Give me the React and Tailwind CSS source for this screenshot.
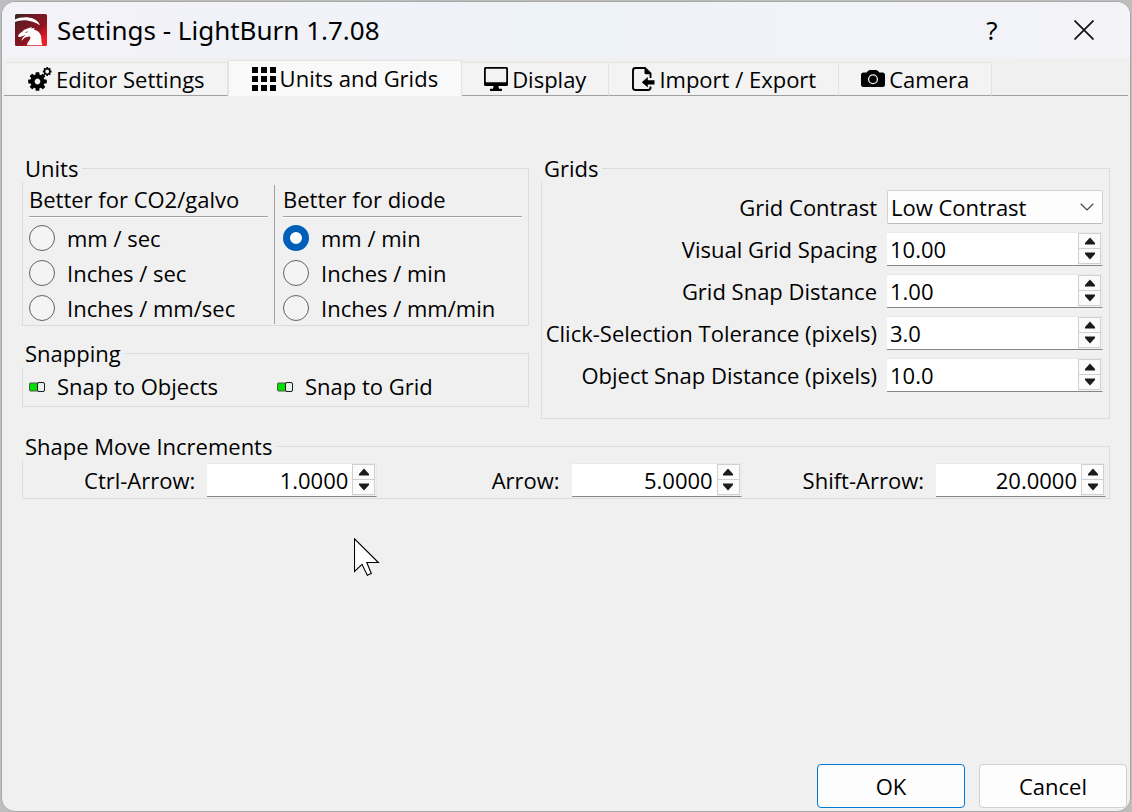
import { useId, useState } from "react";

function LogoIcon() {
  return (
    <svg width="32" height="32" viewBox="0 0 32 32" aria-hidden="true">
      <defs>
        <linearGradient id="logo-bg" x1="0" y1="0" x2="1" y2="1">
          <stop offset="0" stopColor="#2b2624" />
          <stop offset="0.25" stopColor="#6a1a22" />
          <stop offset="0.6" stopColor="#8a1420" />
          <stop offset="0.85" stopColor="#ee1c25" />
          <stop offset="1" stopColor="#ee1c25" />
        </linearGradient>
      </defs>
      <rect width="32" height="32" rx="1.5" fill="url(#logo-bg)" />
      <path d="M0 5.500C5 2.900 13 2.400 18.500 4.800C22.500 6.700 24.600 9.600 24.800 11.400C21 8.600 15 6.300 9 6.300C5.500 6.300 2.500 7 0 8Z" fill="#fff" />
      <path
        d="M3.200 21.500C4 19.500 6 18.700 7.500 17.500C9 16 10.500 15 12.500 14.600L16.600 13L16.400 14.500L19.600 14L19 15.400C22.500 16.200 25.200 18.600 26 22C26.700 25 26 28.500 27.500 31.200H12C12 28.500 14.500 27 15.300 24.500C15.500 23.500 15.200 22.800 14.600 22.300C12.800 23.300 11.300 22.900 10 23.600C9 24.400 7.800 26 6.200 26.800L7.400 24.200C8.300 22.800 9.600 22.100 10.300 21.200C8.600 21.300 7.200 22.300 5.800 22.700C4.600 23.100 3.300 23.600 3.200 21.500Z"
        fill="#fff"
      />
      <path d="M9.500 18.700L12.800 17.200L12.200 18.600Z" fill="#7d1420" />
    </svg>
  );
}

function Gear({ cx, cy, r, hole, tooth }) {
  return (
    <g transform={`translate(${cx} ${cy})`}>
      <circle r={(r + hole) / 2} fill="none" stroke="currentColor" strokeWidth={r - hole} />
      {[0, 45, 90, 135, 180, 225, 270, 315].map((angle) => (
        <rect key={angle} x={-tooth} y={-r - tooth * 1.1} width={tooth * 2} height={tooth * 2} rx={tooth * 0.3} transform={`rotate(${angle})`} fill="currentColor" />
      ))}
    </g>
  );
}

function GearsIcon() {
  return (
    <svg width="24" height="24" viewBox="0 0 24 24" aria-hidden="true">
      <Gear cx={9.5} cy={14.5} r={7.200} hole={2.900} tooth={1.900} />
      <Gear cx={19.200} cy={4.500} r={3.400} hole={1.900} tooth={0.900} />
    </svg>
  );
}

function GridIcon() {
  return (
    <svg width="24" height="24" viewBox="0 0 24 24" fill="currentColor" aria-hidden="true">
      {[0, 9, 18].map((y) => [0, 9, 18].map((x) => <rect key={`${x}-${y}`} x={x} y={y} width="6" height="6" />))}
    </svg>
  );
}

function DisplayIcon() {
  return (
    <svg width="24" height="24" viewBox="0 0 24 24" fill="currentColor" aria-hidden="true">
      <path fillRule="evenodd" d="M1.500 0H22.500Q24 0 24 1.500V17.500Q24 19 22.500 19H1.500Q0 19 0 17.500V1.500Q0 0 1.500 0ZM1.800 1.800V15.200H22.200V1.800Z" />
      <path d="M9.500 19H14.500L15 21.800H18V24H6V21.800H9Z" />
    </svg>
  );
}

function ImportIcon() {
  return (
    <svg width="24" height="24" viewBox="0 0 24 24" aria-hidden="true">
      <path d="M19.500 11V6.500L14 1H4.500Q2 1 2 3.500V20.500Q2 23 4.500 23H17Q19.500 23 19.500 20.500V19.500" fill="none" stroke="currentColor" strokeWidth="1.900" />
      <path d="M13.500 0.500L20.400 7.200H15Q13.500 7.200 13.500 5.700Z" fill="currentColor" />
      <path d="M10.800 15.300L16.800 10V13.200H23.500V17.400H16.800V20.600Z" fill="currentColor" />
    </svg>
  );
}

function CameraIcon() {
  return (
    <svg width="24" height="24" viewBox="0 0 24 24" aria-hidden="true">
      <path d="M2.500 5.500H5.500L7.500 3.500Q8.300 3 9.300 3H14.700Q15.700 3 16.500 3.500L18.500 5.500H21.500Q24 5.500 24 8V17.500Q24 20 21.500 20H2.500Q0 20 0 17.500V8Q0 5.500 2.500 5.500Z" fill="currentColor" />
      <circle cx="12" cy="12.200" r="4.400" fill="none" stroke="#f3f3f3" strokeWidth="1.300" />
    </svg>
  );
}

function Tab({ icon, label, active }) {
  return (
    <button
      type="button"
      role="tab"
      aria-selected={!!active}
      className={
        active
          ? "flex h-9 items-center justify-center gap-1 border-x border-t border-[#e3e3e3] bg-[#f9f9f9] px-[23px]"
          : "flex h-[34px] items-center justify-center gap-1 border-r border-t border-b border-[#e3e3e3] border-b-[#a0a0a0] bg-[#f3f3f3] px-[22px]"
      }
    >
      {icon}
      {label}
    </button>
  );
}

function Group({ title, className, children }) {
  return (
    <fieldset className={`min-w-0 border border-[#dcdcdc] pl-[6px] ${className}`}>
      <legend className="-ml-[7px] h-7 bg-[#f0f0f0] pl-[3px] pr-1 leading-7">{title}</legend>
      {children}
    </fieldset>
  );
}

function UnitColumn({ title, options, selected, onSelect }) {
  return (
    <div className="min-w-0 flex-1">
      <h2 className="border-b border-[#a0a0a0] pb-1 pt-1 leading-[26px] shadow-[0_1px_0_#ffffff]">{title}</h2>
      <div className="mt-[5px] flex flex-col gap-[3px]">
        {options.map((option) => (
          <label key={option} className="flex h-8 items-center gap-3">
            <input
              type="radio"
              name="units"
              checked={selected === option}
              onChange={() => onSelect(option)}
              className="size-[26px] shrink-0 appearance-none rounded-full border border-[#626262] bg-[#f4f4f4] checked:border-[7px] checked:border-[#005fb8] checked:bg-white"
            />
            {option}
          </label>
        ))}
      </div>
    </div>
  );
}

function Toggle({ label }) {
  const [on, setOn] = useState(true);
  return (
    <label className="flex items-center gap-3">
      <input type="checkbox" className="sr-only" checked={on} onChange={() => setOn(!on)} />
      <svg width="16" height="12" viewBox="0 0 16 12" className="shrink-0" aria-hidden="true">
        <rect x="0.500" y="2" width="15" height="8" rx="1" fill={on ? "#00e000" : "#c8c8c8"} stroke="#4a5a4a" />
        <rect x={on ? 8.500 : 0.500} y="1.500" width="7" height="9" rx="1.500" fill="#e9f3e9" stroke="#1c1c1c" />
      </svg>
      {label}
    </label>
  );
}

function SpinBox({ id, initial, digits, className = "" }) {
  const [value, setValue] = useState(initial);
  const step = (delta) => setValue((Number(value) + delta).toFixed(digits));
  return (
    <div className="flex h-[34px] border-r border-t border-b border-[#e9e9e9] border-b-[#868686] bg-white">
      <input
        id={id}
        type="text"
        inputMode="decimal"
        value={value}
        onChange={(e) => setValue(e.target.value)}
        className={`w-full min-w-0 flex-1 bg-white outline-none ${className}`}
      />
      <div className="flex w-6 flex-col bg-[#f0f0f0] pb-px pr-px">
        <button type="button" aria-label="Increase" onClick={() => step(1)} className="flex flex-1 items-center justify-center border border-[#d0d0d0] bg-[#fbfbfb]">
          <svg width="12" height="8" viewBox="0 0 12 8" aria-hidden="true">
            <path d="M6 0.500L11 6V7.500H1V6Z" fill="#1b1b1b" />
          </svg>
        </button>
        <button type="button" aria-label="Decrease" onClick={() => step(-1)} className="flex flex-1 items-center justify-center border border-t-0 border-[#d0d0d0] bg-[#fbfbfb]">
          <svg width="12" height="8" viewBox="0 0 12 8" aria-hidden="true">
            <path d="M6 7.500L11 2V0.500H1V2Z" fill="#1b1b1b" />
          </svg>
        </button>
      </div>
    </div>
  );
}

function GridField({ label, initial, digits }) {
  const id = useId();
  return (
    <>
      <label htmlFor={id} className="flex justify-end whitespace-nowrap">
        {label}
      </label>
      <SpinBox id={id} initial={initial} digits={digits} className="pl-[3px]" />
    </>
  );
}

function MoveField({ label, initial }) {
  const id = useId();
  return (
    <div className="flex items-center justify-end gap-3">
      <label htmlFor={id}>{label}</label>
      <div className="w-[170px]">
        <SpinBox id={id} initial={initial} digits={4} className="pr-1 text-right" />
      </div>
    </div>
  );
}

export default function App() {
  const [unit, setUnit] = useState("mm / min");
  return (
    <div className="flex min-h-screen flex-col bg-[#bdbdbd] px-px pt-px font-['Open_Sans','Noto_Sans',sans-serif] text-[22px] font-normal text-black">
      <main className="relative flex flex-1 flex-col rounded-[14px] border border-[#a8a8a8] bg-[#f0f0f0]">
        <header className="flex h-14 items-center rounded-t-[13px] bg-linear-to-r from-[#f3f2f8] via-[#eef3f8] to-[#f3f3f8] pl-[13px] font-['Noto_Sans',sans-serif]">
          <LogoIcon />
          <h1 className="flex-1 pl-[10px] text-[26px]">Settings - LightBurn 1.7.08</h1>
          <button type="button" aria-label="Help" className="flex w-[92px] justify-center text-[26px]">
            ?
          </button>
          <button type="button" aria-label="Close" className="flex w-[92px] justify-center">
            <svg width="20" height="20" viewBox="0 0 20 20" aria-hidden="true">
              <path d="M0.500 0.500L19.500 19.500M19.500 0.500L0.500 19.500" stroke="#111" strokeWidth="1.700" />
            </svg>
          </button>
        </header>

        <div role="tablist" className="flex items-end px-[2px] pt-[2px]">
          <span className="w-[2px] self-end border-b border-[#a0a0a0]" />
          <Tab icon={<GearsIcon />} label="Editor Settings" />
          <Tab icon={<GridIcon />} label="Units and Grids" active />
          <Tab icon={<DisplayIcon />} label="Display" />
          <Tab icon={<ImportIcon />} label="Import / Export" />
          <Tab icon={<CameraIcon />} label="Camera" />
          <span className="flex-1 self-end border-b border-[#a0a0a0]" />
        </div>

        <div className="flex flex-1 flex-col gap-[13px] pl-5 pr-5 pt-[58px]">
          <div className="grid grid-cols-[507fr_569fr] items-start gap-3">
            <div className="flex flex-col gap-[13px]">
              <Group title="Units" className="pb-px pr-[6px]">
                <div className="flex">
                  <UnitColumn title="Better for CO2/galvo" options={["mm / sec", "Inches / sec", "Inches / mm/sec"]} selected={unit} onSelect={setUnit} />
                  <div className="ml-[6px] mr-[8px] mt-[3px] w-px bg-[#a0a0a0]" />
                  <UnitColumn title="Better for diode" options={["mm / min", "Inches / min", "Inches / mm/min"]} selected={unit} onSelect={setUnit} />
                </div>
              </Group>
              <Group title="Snapping" className="pr-[3px]">
                <div className="grid h-[39px] grid-cols-2">
                  <Toggle label="Snap to Objects" />
                  <Toggle label="Snap to Grid" />
                </div>
              </Group>
            </div>
            <Group title="Grids" className="pb-[26px] pr-[6px]">
              <div className="grid grid-cols-[minmax(0,1fr)_216px] items-center gap-x-[10px] gap-y-2 pt-2">
                <label htmlFor="grid-contrast" className="flex justify-end whitespace-nowrap">
                  Grid Contrast
                </label>
                <div className="relative">
                  <select id="grid-contrast" className="block h-[34px] w-full appearance-none rounded-[2px] border border-[#d2d2d2] border-b-[#bcbcbc] bg-[#fdfdfd] pl-[3px] outline-none">
                    <option>Low Contrast</option>
                    <option>Medium Contrast</option>
                    <option>High Contrast</option>
                  </select>
                  <svg width="14" height="8" viewBox="0 0 14 8" className="pointer-events-none absolute right-[9px] top-[13px]" aria-hidden="true">
                    <path d="M0.700 0.800L7 7L13.300 0.800" fill="none" stroke="#444" strokeWidth="1.200" />
                  </svg>
                </div>
                <GridField label="Visual Grid Spacing" initial="10.00" digits={2} />
                <GridField label="Grid Snap Distance" initial="1.00" digits={2} />
                <GridField label="Click-Selection Tolerance (pixels)" initial="3.0" digits={1} />
                <GridField label="Object Snap Distance (pixels)" initial="10.0" digits={1} />
              </div>
            </Group>
          </div>

          <Group title="Shape Move Increments" className="pb-px pr-[3px]">
            <div className="grid grid-cols-3 gap-4 pt-[3px]">
              <MoveField label="Ctrl-Arrow:" initial="1.0000" />
              <MoveField label="Arrow:" initial="5.0000" />
              <MoveField label="Shift-Arrow:" initial="20.0000" />
            </div>
          </Group>
        </div>

        <footer className="flex justify-end gap-[14px] pb-[3px] pr-[3px]">
          <button type="submit" className="h-11 w-[148px] rounded-[4px] border border-[#0078d4] bg-[#fdfdfd]">
            OK
          </button>
          <button type="button" className="h-11 w-[148px] rounded-[4px] border border-[#d0d0d0] bg-[#fdfdfd]">
            Cancel
          </button>
        </footer>

        <svg width="28" height="40" viewBox="0 0 28 40" className="pointer-events-none absolute left-[352px] top-[536px]" aria-hidden="true">
          <path d="M0.500 0.800V33.500L8 26.300L13.300 37.300L17.300 35.500L12.800 24.500H24.400Z" fill="#fff" stroke="#000" strokeWidth="1.100" />
        </svg>
      </main>
    </div>
  );
}
